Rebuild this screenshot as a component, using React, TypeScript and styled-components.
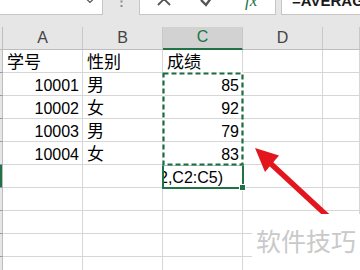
import styled, { createGlobalStyle } from "styled-components";

const GREEN = "#217346";
const GRID = "#d6d6d6";

const GlobalStyle = createGlobalStyle`
  body {
    margin: 0;
    background: #fff;
  }
`;

const Frame = styled.div`
  position: relative;
  width: 360px;
  height: 270px;
  overflow: hidden;
  background: #e6e6e6;
  font-family: "Liberation Sans", "Noto Sans CJK SC", sans-serif;
`;

const FormulaBar = styled.div`
  display: flex;
  align-items: flex-start;
  height: 27px;
  overflow: hidden;
`;

const NameBox = styled.div`
  box-sizing: border-box;
  width: 103px;
  height: 15px;
  display: flex;
  justify-content: flex-end;
  padding-right: 8px;
  background: #fff;
  border-right: 1px solid #c6c6c6;
  border-bottom: 1px solid #c6c6c6;
`;

const Grip = styled.div`
  width: 36px;
  display: flex;
  justify-content: center;
`;

const FxBox = styled.div`
  box-sizing: border-box;
  width: 137px;
  height: 15px;
  display: flex;
  align-items: flex-start;
  padding-left: 16px;
  background: #fff;
  border: 1px solid #c6c6c6;
  border-top: 0;
  overflow: hidden;
`;

const Icon = styled.span<{ $gap: number }>`
  display: block;
  margin-top: -9px;
  margin-left: ${(p) => p.$gap}px;
  line-height: 0;
`;

const Fx = styled.span`
  display: block;
  margin-top: -8px;
  margin-left: 30px;
  font-family: "Liberation Serif", serif;
  font-style: italic;
  font-size: 17px;
  line-height: 17px;
  color: ${GREEN};
`;

const FormulaInput = styled.div`
  box-sizing: border-box;
  flex: 1;
  height: 15px;
  margin-left: 5px;
  padding-left: 10px;
  background: #fff;
  border-left: 1px solid #c6c6c6;
  border-bottom: 1px solid #c6c6c6;
  overflow: hidden;
  white-space: nowrap;
`;

const FormulaText = styled.span`
  display: block;
  margin-top: -7px;
  font-size: 15px;
  line-height: 16px;
  font-weight: 600;
  color: #1a1a1a;
`;

const Sheet = styled.div`
  display: grid;
  grid-template-columns: 3px repeat(4, 80px) 1fr;
  grid-template-rows: repeat(11, 23px);
  background: #fff;
`;

const Corner = styled.div`
  grid-row: 1;
  grid-column: 1;
  box-sizing: border-box;
  background: #e6e6e6;
  border-right: 1px solid #bdbdbd;
  border-bottom: 1px solid #bdbdbd;
`;

const ColHead = styled.div<{ $col: number; $active?: boolean }>`
  grid-row: 1;
  grid-column: ${(p) => p.$col};
  box-sizing: border-box;
  display: flex;
  align-items: flex-end;
  justify-content: center;
  padding-bottom: 3px;
  background: ${(p) => (p.$active ? "#d2d2d2" : "#e6e6e6")};
  border-right: 1px solid #c8c8c8;
  border-bottom: ${(p) => (p.$active ? `2px solid ${GREEN}` : "1px solid #bdbdbd")};
  font-size: 16px;
  line-height: 1;
  color: ${(p) => (p.$active ? GREEN : "#444")};
`;

const RowHead = styled.div<{ $row: number; $active?: boolean }>`
  grid-row: ${(p) => p.$row};
  grid-column: 1;
  box-sizing: border-box;
  background: ${(p) => (p.$active ? GREEN : "#e6e6e6")};
  border-right: 1px solid #bdbdbd;
  border-bottom: 1px solid #9a9a9a;
`;

const Cell = styled.div<{ $row: number; $col: number; $num?: boolean; $cjk?: boolean }>`
  grid-row: ${(p) => p.$row};
  grid-column: ${(p) => p.$col};
  box-sizing: border-box;
  display: flex;
  align-items: flex-end;
  justify-content: ${(p) => (p.$num ? "flex-end" : "flex-start")};
  padding: 0 3px 1px 4px;
  border-right: 1px solid ${GRID};
  border-bottom: 1px solid ${GRID};
  font-size: ${(p) => (p.$cjk ? "17px" : "16px")};
  line-height: 1;
  color: #000;
  white-space: nowrap;
  overflow: hidden;
`;

const Range = styled.div`
  grid-row: 3 / 7;
  grid-column: 4;
  align-self: start;
  justify-self: start;
  width: 82px;
  height: 94px;
  margin: -1px 0 0 -1px;
  z-index: 2;
  pointer-events: none;
`;

const ActiveCell = styled.div`
  grid-row: 7;
  grid-column: 4;
  align-self: start;
  justify-self: start;
  position: relative;
  box-sizing: border-box;
  width: 82px;
  height: 25px;
  margin: -1px 0 0 -1px;
  display: flex;
  background: #fff;
  border: 2px solid ${GREEN};
  z-index: 1;
`;

const EditClip = styled.div`
  flex: 1;
  display: flex;
  align-items: flex-end;
  justify-content: flex-end;
  padding: 0 19px 1px 0;
  overflow: hidden;
  white-space: nowrap;
  font-size: 16px;
  line-height: 1;
  color: #000;
`;

const Handle = styled.span`
  position: absolute;
  right: -4px;
  bottom: -4px;
  width: 5px;
  height: 5px;
  background: ${GREEN};
  border: 1px solid #fff;
`;

const Annotation = styled.svg`
  position: absolute;
  left: 0;
  top: 0;
  pointer-events: none;
`;

const Watermark = styled.div`
  position: absolute;
  left: 252px;
  top: 214px;
  right: 0;
  bottom: 0;
  padding: 14px 0 0 4px;
  background: #fff;
  font-family: "Noto Sans CJK SC", sans-serif;
  font-size: 25px;
  line-height: 1;
  color: #c9c9c9;
`;

type Row = { a: string; b: string; c: string };

const rows: Row[] = [
  { a: "学号", b: "性别", c: "成绩" },
  { a: "10001", b: "男", c: "85" },
  { a: "10002", b: "女", c: "92" },
  { a: "10003", b: "男", c: "79" },
  { a: "10004", b: "女", c: "83" },
];

const isNum = (v: string) => /^\d+$/.test(v);

export default function App() {
  const cells = [];
  for (let r = 2; r <= 11; r++) {
    const data = rows[r - 2];
    const values = data ? [data.a, data.b, data.c, "", ""] : ["", "", "", "", ""];
    cells.push(<RowHead key={`h${r}`} $row={r} $active={r === 7} />);
    values.forEach((v, i) => {
      // C6 is the cell being edited, drawn separately
      if (r === 7 && i === 2) return;
      cells.push(
        <Cell key={`${r}-${i}`} $row={r} $col={i + 2} $num={isNum(v)} $cjk={!!v && !isNum(v)}>
          {v}
        </Cell>
      );
    });
  }

  return (
    <Frame>
      <GlobalStyle />
      <FormulaBar>
        <NameBox>
          <svg width="8" height="4" viewBox="0 0 8 4">
            <path d="M0.5 -1 L4 2.5 L7.5 -1" fill="none" stroke="#555" strokeWidth="1.2" />
          </svg>
        </NameBox>
        <Grip>
          <svg width="3" height="9" viewBox="0 0 3 9">
            <rect x="0.5" y="0.5" width="2" height="2" fill="#8c8c8c" />
            <rect x="0.5" y="5" width="2" height="2" fill="#8c8c8c" />
          </svg>
        </Grip>
        <FxBox>
          <Icon $gap={0}>
            <svg width="16" height="16" viewBox="0 0 16 16">
              <path d="M2 2 L14 14 M14 2 L2 14" stroke="#555" strokeWidth="1.8" fill="none" />
            </svg>
          </Icon>
          <Icon $gap={28}>
            <svg width="15" height="16" viewBox="0 0 15 16">
              <path d="M1 9 L6 14 L14 3" stroke="#555" strokeWidth="2.4" fill="none" />
            </svg>
          </Icon>
          <Fx>fx</Fx>
        </FxBox>
        <FormulaInput>
          <FormulaText>=AVERAGE(C2,C2:C5)</FormulaText>
        </FormulaInput>
      </FormulaBar>
      <Sheet>
        <Corner />
        {["A", "B", "C", "D", ""].map((l, i) => (
          <ColHead key={i} $col={i + 2} $active={l === "C"}>
            {l}
          </ColHead>
        ))}
        {cells}
        <ActiveCell>
          <EditClip>=AVERAGE(C2,C2:C5)</EditClip>
          <Handle />
        </ActiveCell>
        <Range>
          <svg width="82" height="94" viewBox="0 0 82 94">
            <rect x="1.5" y="1.5" width="79" height="91" fill="none" stroke="#fff" strokeWidth="2.2" />
            <rect
              x="1.5"
              y="1.5"
              width="79"
              height="91"
              fill="none"
              stroke="#1d6b40"
              strokeWidth="2.2"
              strokeDasharray="5 3"
            />
          </svg>
        </Range>
      </Sheet>
      <Annotation width="360" height="270" viewBox="0 0 360 270">
        <line x1="269" y1="162" x2="336" y2="224" stroke="#e3161d" strokeWidth="5.5" />
        <polygon points="255,148 279,155.5 265,172" fill="#e3161d" />
      </Annotation>
      <Watermark>软件技巧</Watermark>
    </Frame>
  );
}
